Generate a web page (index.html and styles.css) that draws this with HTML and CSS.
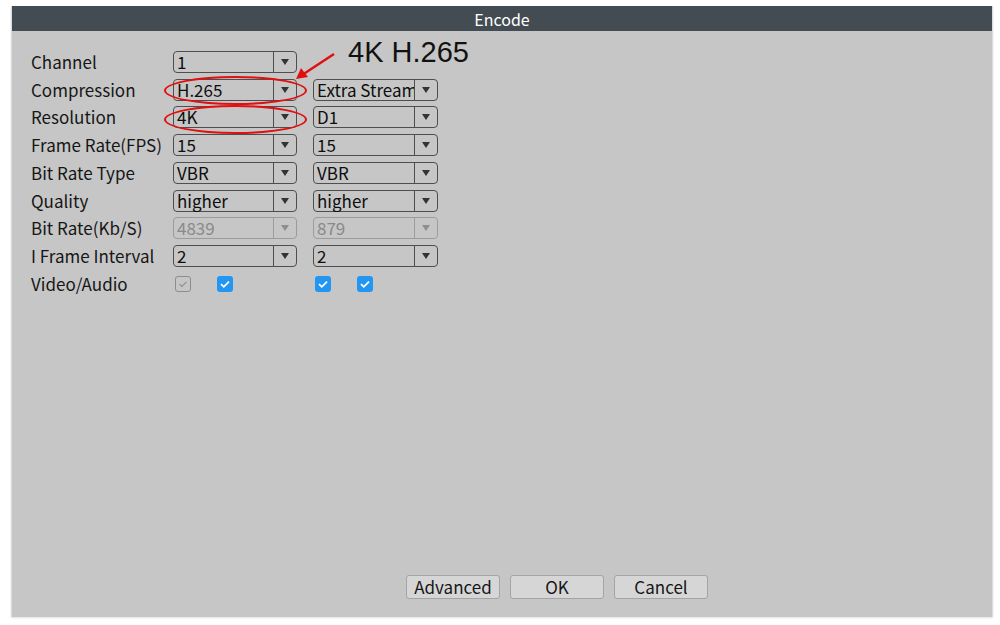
FILE: index.html
```html
<!DOCTYPE html>
<html lang="en">
<head>
<meta charset="UTF-8">
<meta name="viewport" content="width=device-width, initial-scale=1.0">
<title>Encode</title>
<link rel="stylesheet" href="styles.css">
</head>
<body>
<div class="window">
    <div class="title">Encode</div>
    <div class="panel">
        <div class="form">
            <div class="label">Channel</div>
            <div class="select"><span>1</span><i></i></div>
            <div></div>

            <div class="label">Compression</div>
            <div class="select"><span>H.265</span><i></i></div>
            <div class="select"><span class="cut">Extra Stream</span><i></i></div>

            <div class="label">Resolution</div>
            <div class="select"><span>4K</span><i></i></div>
            <div class="select"><span>D1</span><i></i></div>

            <div class="label">Frame Rate(FPS)</div>
            <div class="select"><span>15</span><i></i></div>
            <div class="select"><span>15</span><i></i></div>

            <div class="label">Bit Rate Type</div>
            <div class="select"><span>VBR</span><i></i></div>
            <div class="select"><span>VBR</span><i></i></div>

            <div class="label">Quality</div>
            <div class="select"><span>higher</span><i></i></div>
            <div class="select"><span>higher</span><i></i></div>

            <div class="label">Bit Rate(Kb/S)</div>
            <div class="select disabled"><span>4839</span><i></i></div>
            <div class="select disabled"><span>879</span><i></i></div>

            <div class="label">I Frame Interval</div>
            <div class="select"><span>2</span><i></i></div>
            <div class="select"><span>2</span><i></i></div>

            <div class="label">Video/Audio</div>
            <div class="checks">
                <span class="check off"><svg viewBox="0 0 16 16"><path d="M4 8.2l2.8 2.6L12 5.6" /></svg></span>
                <span class="check on"><svg viewBox="0 0 16 16"><path d="M4 8.2l2.8 2.6L12 5.6" /></svg></span>
            </div>
            <div class="checks">
                <span class="check on"><svg viewBox="0 0 16 16"><path d="M4 8.2l2.8 2.6L12 5.6" /></svg></span>
                <span class="check on"><svg viewBox="0 0 16 16"><path d="M4 8.2l2.8 2.6L12 5.6" /></svg></span>
            </div>
        </div>

        <div class="buttons">
            <button>Advanced</button>
            <button>OK</button>
            <button>Cancel</button>
        </div>

        <!-- red annotation drawn over the form -->
        <div class="ring ring-1"></div>
        <div class="ring ring-2"></div>
        <svg class="arrow" viewBox="0 0 44 30">
            <path d="M40 3L8 24" stroke="#e01010" stroke-width="2.5" fill="none" />
            <path d="M2 28L7 17L14 26Z" fill="#e01010" />
        </svg>
        <div class="note">4K H.265</div>
    </div>
</div>
</body>
</html>
```

FILE: styles.css
```css
body {
    margin: 0;
    padding: 6px 7px 8px 11px;
    background-color: #ffffff;
    font-family: "Noto Sans CJK SC", "Noto Sans", sans-serif;
    height: 625px;
    box-sizing: border-box;
}
.window {
    height: 611px;
    width: 982px;
    display: flex;
    flex-direction: column;
    border-left: 1px solid #dcdcdc;
    border-right: 1px solid #dcdcdc;
    box-sizing: border-box;
    box-shadow: 0 1px 2px rgba(0, 0, 0, 0.12);
}
.title {
    height: 25px;
    background-color: #434c52;
    color: #ffffff;
    text-align: center;
    font-size: 16px;
    line-height: 26px;
}
.panel {
    position: relative;
    flex: 1;
    display: flex;
    flex-direction: column;
    background-color: #c6c6c6;
    padding: 17px 0 18px 19px;
}
.form {
    flex: 1;
    display: grid;
    grid-template-columns: 126px 124px 125px;
    grid-auto-rows: 27.75px;
    column-gap: 16px;
    align-content: start;
    align-items: center;
}
.label {
    font-size: 17px;
    color: #161616;
    line-height: 22px;
    white-space: nowrap;
}
.select {
    height: 22px;
    display: flex;
    align-items: center;
    border: 1px solid #4e4e4e;
    border-radius: 4px;
    box-sizing: border-box;
    color: #0e0e0e;
    font-size: 17px;
}
.select span {
    flex: 1;
    min-width: 0;
    padding-left: 3px;
    line-height: 20px;
    white-space: nowrap;
}
.select span.cut {
    overflow-x: clip;
}
.select i {
    width: 22px;
    height: 100%;
    flex-shrink: 0;
    border-left: 1px solid #4e4e4e;
    position: relative;
}
.select i::after {
    content: "";
    position: absolute;
    left: 7px;
    top: 7px;
    border-left: 4px solid transparent;
    border-right: 4px solid transparent;
    border-top: 6px solid #333333;
}
.select.disabled {
    border-color: #9c9c9c;
    color: #8a8a8a;
}
.select.disabled i {
    border-left-color: #9c9c9c;
}
.select.disabled i::after {
    border-top-color: #8e8e8e;
}
.checks {
    display: flex;
    gap: 26px;
    padding-left: 2px;
}
.check {
    width: 16px;
    height: 16px;
    border-radius: 3px;
    box-sizing: border-box;
    display: flex;
}
.check svg {
    width: 100%;
    height: 100%;
    fill: none;
    stroke-width: 1.8;
}
.check.on {
    background-color: #2196f3;
}
.check.on svg {
    stroke: #ffffff;
}
.check.off {
    border: 1px solid #8c8c8c;
}
.check.off svg {
    stroke: #8c8c8c;
    stroke-width: 1.2;
}
.buttons {
    display: flex;
    gap: 10px;
    padding-left: 375px;
}
.buttons button {
    width: 94px;
    height: 24px;
    padding: 0;
    background-color: #d6d6d6;
    border: 1px solid #a4a4a4;
    border-radius: 3px;
    font-family: "Noto Sans CJK SC", "Noto Sans", sans-serif;
    font-size: 17px;
    line-height: 22px;
    color: #161616;
}
.ring {
    position: absolute;
    left: 152px;
    width: 139px;
    height: 25px;
    border: 2px solid #e01010;
    border-radius: 50%;
}
.ring-1 {
    top: 45px;
}
.ring-2 {
    top: 74px;
}
.arrow {
    position: absolute;
    left: 282px;
    top: 20px;
    width: 44px;
    height: 30px;
}
.note {
    position: absolute;
    left: 336px;
    top: 5px;
    font-family: "Liberation Sans", Arial, sans-serif;
    font-size: 29px;
    color: #111111;
}
```
